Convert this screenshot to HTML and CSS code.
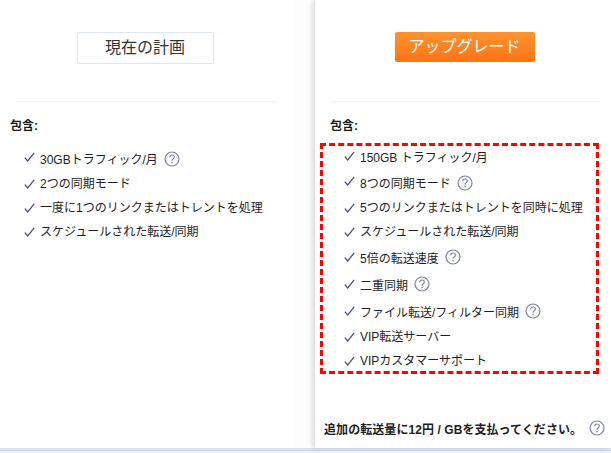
FILE: index.html
```html
<!DOCTYPE html>
<html lang="ja">
<head>
<meta charset="utf-8">
<title>プラン比較</title>
<link rel="stylesheet" href="styles.css">
</head>
<body>
<svg class="defs" width="0" height="0" aria-hidden="true">
  <symbol id="help" viewBox="0 0 16 16">
    <circle cx="8" cy="8" r="7" fill="none" stroke="#7d82a8" stroke-width="1.2"/>
    <path d="M5.700 6.200C5.800 4.800 6.800 4 8 4c1.300 0 2.300.8 2.300 2 0 1-.6 1.500-1.300 2-.7.4-1 .9-1 1.700" fill="none" stroke="#7d82a8" stroke-width="1.200"/>
    <circle cx="8" cy="11.800" r=".8" fill="#7d82a8"/>
  </symbol>
  <symbol id="check" viewBox="0 0 11 10">
    <path d="M.8 5.600 3.700 9 10.200.8" fill="none" stroke="#4d5175" stroke-width="1.300"/>
  </symbol>
</svg>
<main class="plans">
  <section class="card card-left">
    <div class="action"><span class="btn btn-current">現在の計画</span></div>
    <h2 class="inc">包含:</h2>
    <ul class="list">
      <li class="row"><svg class="check check-up"><use href="#check"/></svg>30GBトラフィック/月<svg class="help"><use href="#help"/></svg></li>
      <li class="row"><svg class="check"><use href="#check"/></svg>2つの同期モード</li>
      <li class="row"><svg class="check"><use href="#check"/></svg>一度に1つのリンクまたはトレントを処理</li>
      <li class="row"><svg class="check"><use href="#check"/></svg>スケジュールされた転送/同期</li>
    </ul>
  </section>
  <section class="card card-right">
    <div class="action"><span class="btn btn-upgrade">アップグレード</span></div>
    <h2 class="inc">包含:</h2>
    <ul class="list list-marked">
      <li class="row"><svg class="check check-level"><use href="#check"/></svg>150GB トラフィック/月</li>
      <li class="row row-help row-first"><svg class="check check-up"><use href="#check"/></svg>8つの同期モード<svg class="help"><use href="#help"/></svg></li>
      <li class="row"><svg class="check"><use href="#check"/></svg>5つのリンクまたはトレントを同時に処理</li>
      <li class="row"><svg class="check"><use href="#check"/></svg>スケジュールされた転送/同期</li>
      <li class="row row-help"><svg class="check check-level"><use href="#check"/></svg>5倍の転送速度<svg class="help"><use href="#help"/></svg></li>
      <li class="row row-help"><svg class="check check-level"><use href="#check"/></svg>二重同期<svg class="help"><use href="#help"/></svg></li>
      <li class="row row-help"><svg class="check check-level"><use href="#check"/></svg>ファイル転送/フィルター同期<svg class="help"><use href="#help"/></svg></li>
      <li class="row"><svg class="check"><use href="#check"/></svg>VIP転送サーバー</li>
      <li class="row"><svg class="check"><use href="#check"/></svg>VIPカスタマーサポート</li>
    </ul>
    <p class="extra">追加の転送量に12円 / GBを支払ってください。<svg class="help"><use href="#help"/></svg></p>
  </section>
</main>
<div class="bottom-line"></div>
</body>
</html>
```

FILE: styles.css
```css
* { box-sizing: border-box; }
html, body { margin: 0; padding: 0; }
body {
  width: 611px;
  height: 453px;
  overflow: hidden;
  background: #f1f6fd;
  font-family: "Liberation Sans", "Noto Sans CJK JP", sans-serif;
  font-size: 12px;
  color: #1d1d26;
}
.defs { display: block; height: 0; }
.plans {
  display: flex;
  justify-content: space-between;
  height: 450px;
  background: linear-gradient(90deg, #fbfbfb, #fdfdfd 50%);
  border-bottom: 2px solid #dfe3ee;
}
.card { width: 295px; height: 448px; background: #fff; display: flex; flex-direction: column; }
.card-left { width: 295px; padding-left: 15px; }
.card-right { width: 296px; padding-left: 6px; box-shadow: -3px 0 5px rgba(0,0,0,.13); }
.action { width: 280px; height: 102px; padding-top: 32px; border-bottom: 1px solid #f3f3f5; display: flex; justify-content: center; }
.card-left .action { width: 260px; }
.card-right .action { width: 269px; margin-left: 9px; }
.btn { display: flex; align-items: center; justify-content: center; font-size: 16px; padding-bottom: 5px; }
.btn-current { width: 137px; height: 32px; color: #333; border: 1px solid #dfe7f6; border-radius: 2px; }
.btn-upgrade { width: 140px; height: 30px; color: #fff; border-radius: 2px; background: linear-gradient(180deg, #fe9330, #fd7413); }
.inc { margin: 16px 0 0 -5px; font-size: 12px; line-height: 17px; font-weight: bold; color: #1a1a1a; }
.card-right .inc { margin-left: 9px; }
.list { list-style: none; margin: 13px 0 0; padding: 0 0 0 9px; display: flex; flex-direction: column; gap: 3px; }
.list-marked {
  width: 279px;
  height: 231px;
  margin: 8px 0 0 -1px;
  padding: 0 0 0 21px;
  border: 3px dashed #f00;
}
.row { display: flex; align-items: center; height: 21px; white-space: nowrap; }
.row-help { height: 24px; padding-top: 2px; }
.row-first { height: 23px; }
.check { width: 11px; height: 10px; margin: 2px 5px 0 0; flex: none; }
.check-level { margin: 0 5px 1px 0; }
.check-up { margin: 0 5px 3px 0; }
.help { width: 16px; height: 16px; margin-left: 6px; flex: none; }
.extra { margin: auto 0 11px 3px; display: flex; align-items: center; font-weight: bold; letter-spacing: .07px; white-space: nowrap; height: 18px; }
.extra .help { margin-left: 7px; }
.bottom-line { height: 1px; background: #c8d8fb; }
```
